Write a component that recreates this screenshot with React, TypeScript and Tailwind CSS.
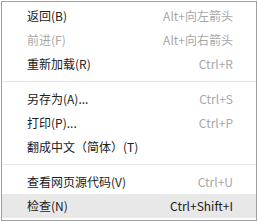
type Item = {
  label: string;
  shortcut?: string;
  disabled?: boolean;
  active?: boolean;
};

const groups: Item[][] = [
  [
    { label: "返回(B)", shortcut: "Alt+向左箭头" },
    { label: "前进(F)", shortcut: "Alt+向右箭头", disabled: true },
    { label: "重新加载(R)", shortcut: "Ctrl+R" },
  ],
  [
    { label: "另存为(A)...", shortcut: "Ctrl+S" },
    { label: "打印(P)...", shortcut: "Ctrl+P" },
    { label: "翻成中文（简体）(T)" },
  ],
  [
    { label: "查看网页源代码(V)", shortcut: "Ctrl+U" },
    { label: "检查(N)", shortcut: "Ctrl+Shift+I", active: true },
  ],
];

function MenuRow({ item }: { item: Item }) {
  return (
    <div
      className={`h-[24px] flex items-center justify-between pl-[25px] pr-[23px] ${
        item.active ? "bg-[#e8e8e8]" : ""
      }`}
    >
      <span className={item.disabled ? "text-[#a8a8a8]" : "text-[#202020]"}>
        {item.label}
      </span>
      {item.shortcut && (
        <span className={item.active ? "text-[#202020]" : "text-[#a8a8a8]"}>
          {item.shortcut}
        </span>
      )}
    </div>
  );
}

export default function App() {
  return (
    <div className="w-[258px] h-[222px] bg-white pt-px pl-px">
      <div
        className="w-[256px] border border-[#a0a0a0] bg-white py-[2px] text-[12px] leading-none"
        style={{ fontFamily: '"Noto Sans CJK SC", "Noto Sans", sans-serif' }}
      >
        {groups.map((group, gi) => (
          <div key={gi}>
            {gi > 0 && (
              <div className="h-[11px] flex items-center">
                <div className="h-px w-full bg-[#e3e3e3]" />
              </div>
            )}
            {group.map((item) => (
              <MenuRow key={item.label} item={item} />
            ))}
          </div>
        ))}
      </div>
    </div>
  );
}
